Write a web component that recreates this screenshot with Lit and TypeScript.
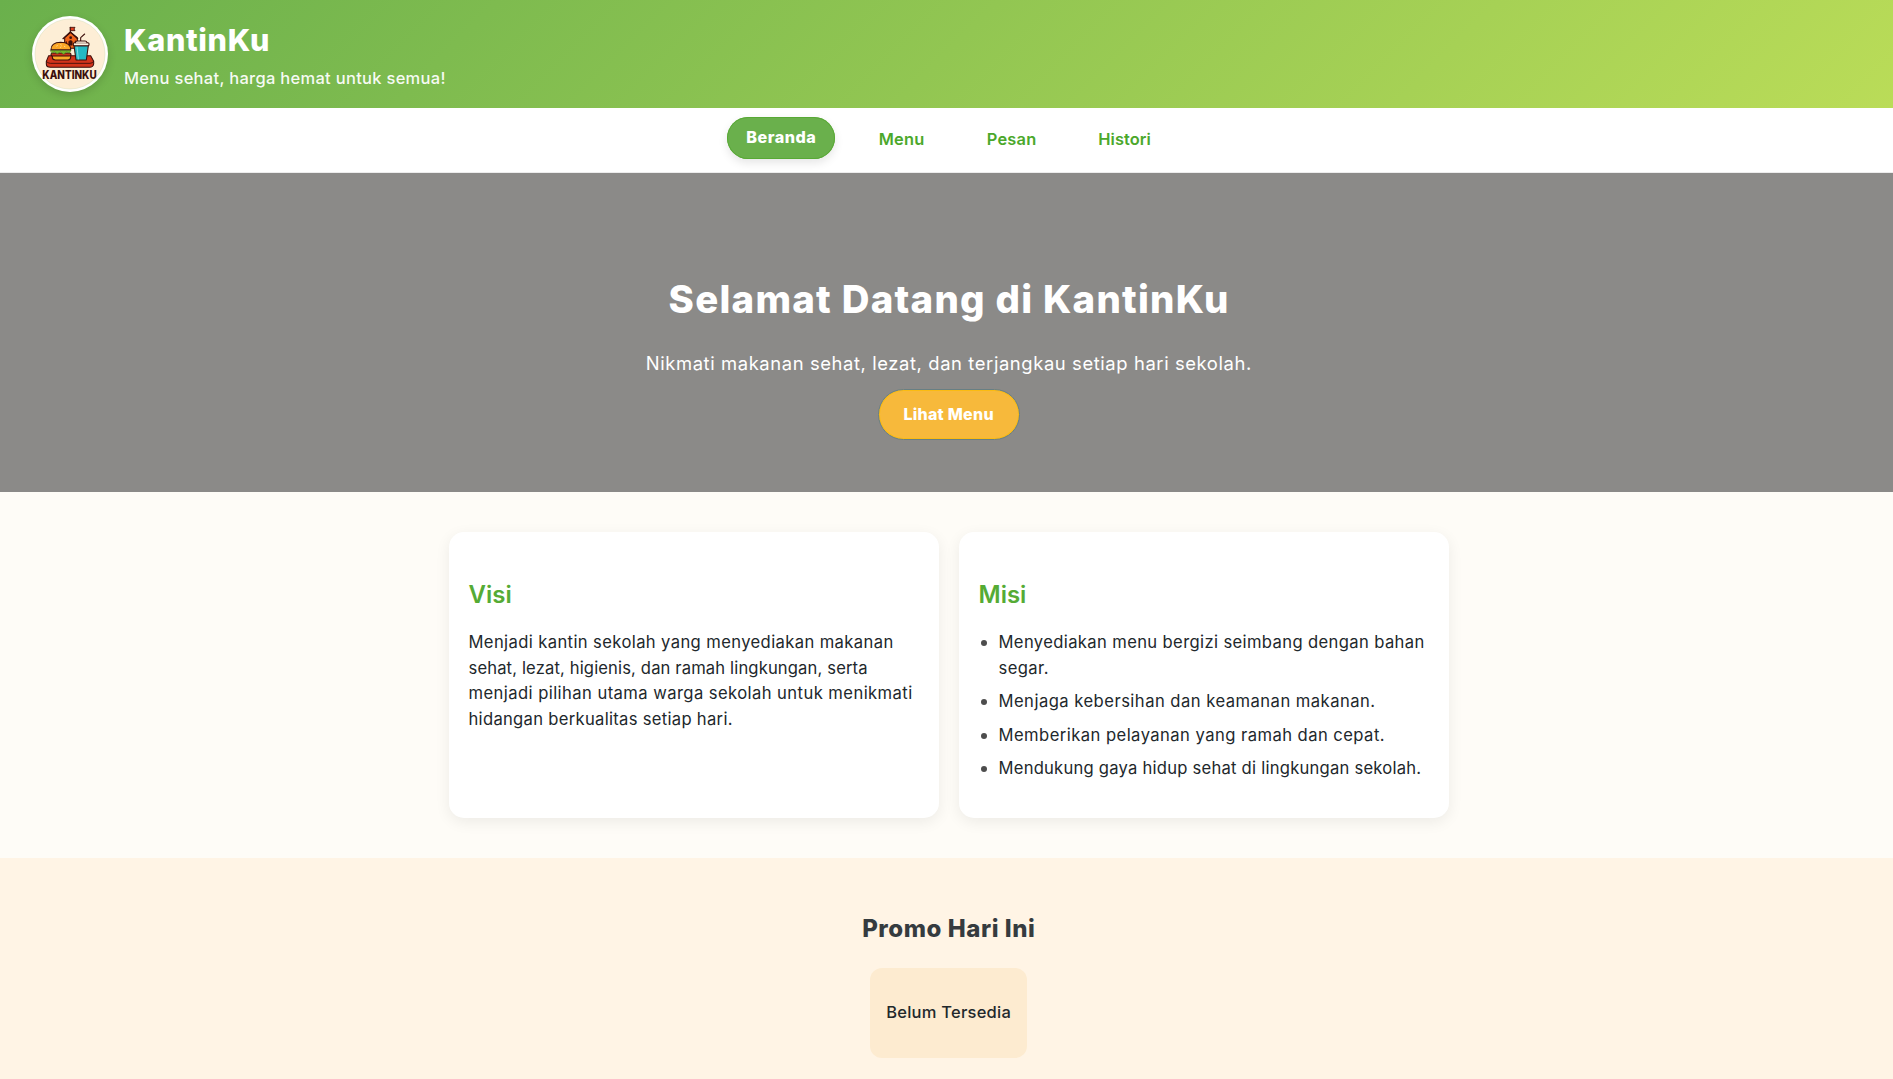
import { LitElement, html, css } from "lit";
import { customElement, property } from "lit/decorators.js";
import { classMap } from "lit/directives/class-map.js";

/** One line of copy with its letter spacing in pixels. */
type Line = [text: string, tracking: number];

const line = ([text, tracking]: Line) =>
  html`<span class="line" style="letter-spacing:${tracking}px;margin-right:${-tracking}px">${text}</span>`;

const NAV: { label: Line; width: number; active?: boolean }[] = [
  { label: ["Beranda", 0.5], width: 108, active: true },
  { label: ["Menu", 0.25], width: 85 },
  { label: ["Pesan", 0.2], width: 87 },
  { label: ["Histori", 0.08], width: 91 },
];

const VISI: Line[] = [
  ["Menjadi kantin sekolah yang menyediakan makanan", 0.385],
  ["sehat, lezat, higienis, dan ramah lingkungan, serta", 0.14],
  ["menjadi pilihan utama warga sekolah untuk menikmati", 0.43],
  ["hidangan berkualitas setiap hari.", 0.3],
];

const MISI: Line[][] = [
  [
    ["Menyediakan menu bergizi seimbang dengan bahan", 0.37],
    ["segar.", 0.4],
  ],
  [["Menjaga kebersihan dan keamanan makanan.", 0.475]],
  [["Memberikan pelayanan yang ramah dan cepat.", 0.45]],
  [["Mendukung gaya hidup sehat di lingkungan sekolah.", 0.235]],
];

/** Round badge: school house, burger and drink on a tray. */
@customElement("kantin-logo")
export class KantinLogo extends LitElement {
  static styles = css`
    :host {
      display: block;
      flex: none;
      width: 76px;
      height: 76px;
      border-radius: 50%;
      box-shadow: 0 3px 8px rgba(0, 0, 0, 0.15);
    }
    svg {
      display: block;
      width: 100%;
      height: 100%;
    }
    .name {
      font-family: "Inter", "Open Sans", sans-serif;
      font-weight: 800;
      font-size: 34px;
    }
  `;

  render() {
    return html`
      <svg viewBox="36 33 228 228">
        <circle cx="150" cy="147" r="114" fill="#fff" />
        <circle cx="150" cy="147" r="105" fill="#fdeed6" stroke="#d9dcb4" stroke-width="1.5" />
        <g stroke="#3b0f0b" stroke-width="3.2" stroke-linejoin="round" stroke-linecap="round">
          <path d="M151 84V67" fill="none" />
          <path d="M152 67h13l-3 5 3 5h-13z" fill="#e0401f" stroke-width="2.5" />
          <path d="M134 98v32h38V98L152 82z" fill="#f0641a" />
          <path d="M129 101l22-20 22 20" fill="none" stroke-width="4" />
          <circle cx="152" cy="98" r="4" fill="#3b0f0b" stroke="none" />
          <path d="M147 120v-10q5-5 9 0v10z" fill="#3b0f0b" />
          <path d="M139 110v6M166 108v5" fill="none" />
          <path d="M86 152h126l9 17v8q-2 10-12 10H91q-12 0-12-10v-8z" fill="#d2331a" />
          <path d="M79 169q4 6 12 6h119q8 0 11-6" fill="none" stroke-width="2.6" />
          <path d="M97 150h55v7q-1 8-9 8h-37q-9 0-9-8z" fill="#fbab28" />
          <rect x="93" y="144" width="60" height="9" rx="4.5" fill="#c8331b" />
          <path d="M92 136h61l-5 8-8-3-9 7-10-7-9 5-9-5-7 3z" fill="#74b62b" stroke="#4c7d1d" stroke-width="2" />
          <path d="M93 134q-1-21 29-22 31 1 30 22z" fill="#fba726" />
          <path d="M110 123l2-1M122 119l2 1M133 124l2 1M121 127l2-1" stroke="#ffe2a4" stroke-width="2.5" />
          <path d="M182 110V98l12-11" fill="none" />
          <path d="M162 122h43l-6 43h-31z" fill="#24b9c4" />
          <path d="M171 126l4 36" stroke="#7fe0e4" stroke-width="3" fill="none" />
          <rect x="160" y="113" width="47" height="9" rx="3" fill="#fff3e2" />
          <path d="M166 113q1-5 6-5h23q5 0 6 5" fill="#fff3e2" />
        </g>
        <text class="name" x="67" y="221" textLength="163" lengthAdjust="spacingAndGlyphs" fill="#3b0f0b">KANTINKU</text>
      </svg>
    `;
  }
}

/** White panel with a green heading. */
@customElement("info-card")
export class InfoCard extends LitElement {
  static styles = css`
    :host {
      display: block;
      box-sizing: border-box;
      width: 490px;
      height: 286px;
      padding: 43.8px 20px 20px;
      border-radius: 15px;
      background: #fff;
      box-shadow: 0 4px 15px rgba(0, 0, 0, 0.07);
    }
    .heading {
      margin: 0 0 16px;
      font-size: 24px;
      font-weight: 600;
      line-height: 38.4px;
      color: #55ab35;
    }
  `;

  @property() heading = "";

  render() {
    return html`<h2 class="heading">${this.heading}</h2><slot></slot>`;
  }
}

@customElement("app-root")
export class AppRoot extends LitElement {
  static styles = css`
    :host {
      display: block;
      height: 1079px;
      overflow: hidden;
      font-family: "Inter", "Open Sans", sans-serif;
      font-size: 16px;
      line-height: 25.6px;
      color: #22282c;
      background: #fefcf7;
    }
    .page {
      width: 1897px;
    }
    .line {
      display: inline-block;
      white-space: nowrap;
    }
    .header {
      display: flex;
      align-items: center;
      gap: 16px;
      box-sizing: border-box;
      width: 1893px;
      height: 108px;
      padding: 0 32px;
      color: #fff;
      background: linear-gradient(135deg, #6ab04c, #badc58);
    }
    .brand {
      display: flex;
      flex-direction: column;
      height: 76px;
    }
    .name {
      margin: 0;
      font-size: 30.6px;
      font-weight: 800;
      line-height: 48px;
    }
    .tagline {
      margin: 2.4px 0 0;
      font-size: 16.5px;
      font-weight: 500;
      color: rgba(255, 255, 255, 0.94);
    }
    .nav {
      display: flex;
      justify-content: center;
      gap: 24px;
      box-sizing: border-box;
      height: 65px;
      padding-top: 11px;
      background: #fff;
      border-bottom: 1px solid #ececec;
    }
    .item {
      box-sizing: border-box;
      height: 42px;
      padding-top: 8.4px;
      border-radius: 21px;
      text-align: center;
      font-size: 16.4px;
      font-weight: 600;
      color: #4ba82b;
    }
    .item.active {
      margin-top: -2px;
      font-weight: 800;
      font-size: 16.2px;
      color: #fff;
      background: #6ab04c;
      box-shadow: inset 0 0 0 1px #58a935, 0 4px 10px rgba(0, 0, 0, 0.1);
    }
    .hero {
      display: flex;
      flex-direction: column;
      align-items: center;
      box-sizing: border-box;
      height: 319px;
      padding-top: 96.4px;
      color: #fff;
      background: #8b8a88;
    }
    .welcome {
      margin: 0 0 20px;
      font-size: 38.4px;
      font-weight: 800;
      line-height: 60px;
    }
    .lead {
      margin: 0 0 11.6px;
      font-size: 18.4px;
      line-height: 28px;
    }
    .cta {
      box-sizing: border-box;
      width: 142px;
      height: 51px;
      padding: 1px 0 0;
      border: 1px solid #677f84;
      border-radius: 25.5px;
      text-align: center;
      font-family: inherit;
      font-size: 16px;
      font-weight: 800;
      line-height: 25.6px;
      color: #fff;
      background: #f7b93b;
      box-shadow: inset 0 0 0 1px #fbbb12;
    }
    .about {
      display: flex;
      justify-content: center;
      gap: 20px;
      padding: 40px 0;
    }
    .copy {
      display: flex;
      flex-direction: column;
      align-items: flex-start;
      margin: 0;
      font-size: 16.6px;
    }
    .list {
      display: flex;
      flex-direction: column;
      gap: 7.8px;
      margin: 0;
      padding: 0;
      list-style: none;
    }
    .entry {
      display: flex;
      gap: 12px;
      padding-left: 2px;
    }
    .dot {
      flex: none;
      width: 6px;
      height: 6px;
      margin-top: 10px;
      border-radius: 50%;
      background: #4d4d4d;
    }
    .promo {
      display: flex;
      flex-direction: column;
      align-items: center;
      box-sizing: border-box;
      height: 221px;
      padding-top: 51.8px;
      background: #fff4e5;
    }
    .promo-title {
      margin: 0 0 19.8px;
      font-size: 24px;
      font-weight: 800;
      line-height: 38.4px;
      color: #353b3f;
    }
    .offer {
      box-sizing: border-box;
      width: 157px;
      height: 90px;
      padding-top: 32px;
      border-radius: 12px;
      text-align: center;
      font-size: 16.5px;
      font-weight: 500;
      background: #fdebd0;
    }
  `;

  render() {
    return html`
      <div class="page">
        <header class="header">
          <kantin-logo></kantin-logo>
          <div class="brand">
            <h1 class="name">${line(["KantinKu", 0.65])}</h1>
            <p class="tagline">${line(["Menu sehat, harga hemat untuk semua!", 0.29])}</p>
          </div>
        </header>
        <nav class="nav">
          ${NAV.map(
            (n) => html`<a class=${classMap({ item: true, active: !!n.active })} style="width:${n.width}px">${line(n.label)}</a>`
          )}
        </nav>
        <section class="hero">
          <h2 class="welcome">${line(["Selamat Datang di KantinKu", 1.25])}</h2>
          <p class="lead">${line(["Nikmati makanan sehat, lezat, dan terjangkau setiap hari sekolah.", 0.6])}</p>
          <button class="cta">${line(["Lihat Menu", 0.27])}</button>
        </section>
        <section class="about">
          <info-card heading="Visi">
            <p class="copy">${VISI.map(line)}</p>
          </info-card>
          <info-card heading="Misi">
            <ul class="list">
              ${MISI.map(
                (lines) => html`<li class="entry"><span class="dot"></span><span class="copy">${lines.map(line)}</span></li>`
              )}
            </ul>
          </info-card>
        </section>
        <section class="promo">
          <h2 class="promo-title">${line(["Promo Hari Ini", 0.55])}</h2>
          <div class="offer">${line(["Belum Tersedia", 0.24])}</div>
        </section>
      </div>
    `;
  }
}
